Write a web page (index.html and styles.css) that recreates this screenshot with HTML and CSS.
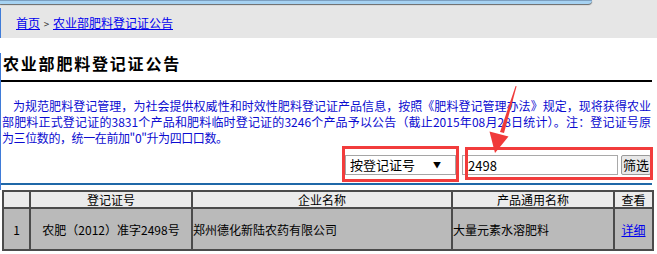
FILE: index.html
```html
<!DOCTYPE html>
<html lang="zh">
<head>
<meta charset="utf-8">
<title>农业部肥料登记证公告</title>
<link rel="stylesheet" href="styles.css">
</head>
<body>
<div class="header">
  <div class="header-bar"></div>
  <div class="crumb"><a href="#">首页</a> <span class="sep">&gt;</span> <a href="#">农业部肥料登记证公告</a></div>
</div>
<div class="page">
  <h1 class="title">农业部肥料登记证公告</h1>
  <p class="intro"><span class="line first">为规范肥料登记管理，为社会提供权威性和时效性肥料登记证产品信息，按照《肥料登记管理办法》规定，现将获得农业</span><span class="line">部肥料正式登记证的3831个产品和肥料临时登记证的3246个产品予以公告（截止2015年08月28日统计）。注：登记证号原</span><span class="line last">为三位数的，统一在前加"0"升为四口口数。</span></p>
  <div class="filter">
    <span class="select-wrap"><select class="select"><option>按登记证号</option></select></span>
    <input class="keyword" type="text" value="2498">
    <button class="btn" type="button">筛选</button>
  </div>
</div>
<table class="list">
  <colgroup>
    <col class="c1"><col class="c2"><col class="c3"><col class="c4"><col class="c5">
  </colgroup>
  <thead>
    <tr><th></th><th>登记证号</th><th>企业名称</th><th>产品通用名称</th><th>查看</th></tr>
  </thead>
  <tbody>
    <tr><td class="center">1</td><td class="center">农肥（2012）准字2498号</td><td>郑州德化新陆农药有限公司</td><td>大量元素水溶肥料</td><td class="center"><a href="#">详细</a></td></tr>
  </tbody>
</table>
<div class="mark mark-select"></div>
<div class="mark mark-input"></div>
<svg class="arrow" width="657" height="254" viewBox="0 0 657 254" xmlns="http://www.w3.org/2000/svg">
  <polygon points="515.6,86 516.6,86.3 504,133 500,132" fill="#f03a3a"/>
  <polygon points="495,153 489.5,131.5 508.5,136.5" fill="#f03a3a"/>
</svg>
</body>
</html>
```
FILE: styles.css
```css
html, body {
  margin: 0;
  padding: 0;
}
body {
  position: relative;
  width: 657px;
  height: 254px;
  overflow: hidden;
  background: #fff;
  font-family: "Noto Sans CJK SC", "Liberation Sans", sans-serif;
  font-size: 12px;
  color: #000;
}
.header {
  background: #e6e6e6;
  height: 38px;
}
.header-bar {
  width: 592px;
  height: 3px;
  border-top: 1px solid #7c9fc0;
  background: #a6d2f2;
  border-bottom-right-radius: 6px;
  box-shadow: 0 1px 1px #666;
}
.crumb {
  margin-top: 4px;
  height: 30px;
  line-height: 30px;
  padding-left: 15px;
  border-left: 1px solid #3f7bd8;
}
.crumb a {
  color: #0000ee;
  text-decoration: underline;
}
.crumb .sep {
  color: #333;
  font-size: 10px;
  margin: 0 1px;
}
.page {
  border-left: 1px solid #3f7bd8;
  padding-bottom: 5px;
}
.title {
  margin: 15px 5px 0 0;
  padding: 0 0 7px 2px;
  font-size: 16px;
  font-weight: bold;
  line-height: 20px;
  letter-spacing: 1.8px;
  border-bottom: 2px solid #000;
}
.intro {
  margin: 16px 6px 0 0;
  padding-left: 1px;
  line-height: 16px;
  color: #0b0bd0;
  font-size: 12px;
}
.intro .line {
  display: block;
  white-space: nowrap;
  text-align: justify;
  text-align-last: justify;
}
.intro .line.first {
  padding-left: 11px;
}
.intro .line.last {
  text-align: left;
  text-align-last: left;
  letter-spacing: -0.4px;
}
.filter {
  margin: 9px 5px 0 0;
  padding: 0 1px 8px 0;
  display: flex;
  justify-content: flex-end;
  align-items: center;
  border-bottom: 2px solid #1f68a8;
}
.select-wrap {
  position: relative;
  width: 111px;
  height: 20px;
  margin-right: 6px;
}
.select-wrap::after {
  content: "▼";
  position: absolute;
  right: 15px;
  top: 4px;
  font-size: 8px;
  line-height: 12px;
  color: #000;
  pointer-events: none;
}
.select {
  -webkit-appearance: none;
  appearance: none;
  box-sizing: border-box;
  width: 111px;
  height: 20px;
  margin: 0;
  padding: 0 0 0 4px;
  border: 1px solid #a5a5a5;
  background: #fff;
  font-family: inherit;
  font-size: 13px;
  line-height: 18px;
  color: #000;
  border-radius: 0;
}
.keyword {
  box-sizing: border-box;
  width: 156px;
  height: 20px;
  margin: 0 3px 0 0;
  padding: 0 0 0 5px;
  border: 1px solid #a9a9a9;
  font-family: inherit;
  font-size: 13px;
  color: #000;
}
.btn {
  box-sizing: border-box;
  width: 30px;
  height: 20px;
  margin: 0;
  padding: 0;
  border: 1px solid #9a9a9a;
  border-radius: 2px;
  background: #e8e8e8;
  font-family: inherit;
  font-size: 13px;
  line-height: 16px;
  color: #000;
}
.list {
  margin: 0 0 0 2px;
  width: 650px;
  border-collapse: collapse;
  table-layout: fixed;
  border: 2px solid #4b4b4b;
}
.list col.c1 { width: 27px; }
.list col.c2 { width: 162px; }
.list col.c3 { width: 260px; }
.list col.c4 { width: 162px; }
.list col.c5 { width: 39px; }
.list th, .list td {
  border: 2px solid #4b4b4b;
  padding: 0;
  font-size: 12px;
  white-space: nowrap;
  overflow: hidden;
}
.list th {
  height: 15px;
  line-height: 15px;
  font-weight: normal;
  background: #ebebeb;
  text-align: center;
}
.list td {
  height: 40px;
  background: #bababa;
  text-align: left;
}
.list td.center {
  text-align: center;
}
.list td a {
  color: #0000ee;
  text-decoration: underline;
}
.mark {
  position: absolute;
  box-sizing: border-box;
  border: 3px solid #f23c3c;
  pointer-events: none;
}
.mark-select {
  left: 342px;
  top: 146px;
  width: 117px;
  height: 36px;
}
.mark-input {
  left: 465px;
  top: 147px;
  width: 188px;
  height: 33px;
}
.arrow {
  position: absolute;
  left: 0;
  top: 0;
  pointer-events: none;
}
```
